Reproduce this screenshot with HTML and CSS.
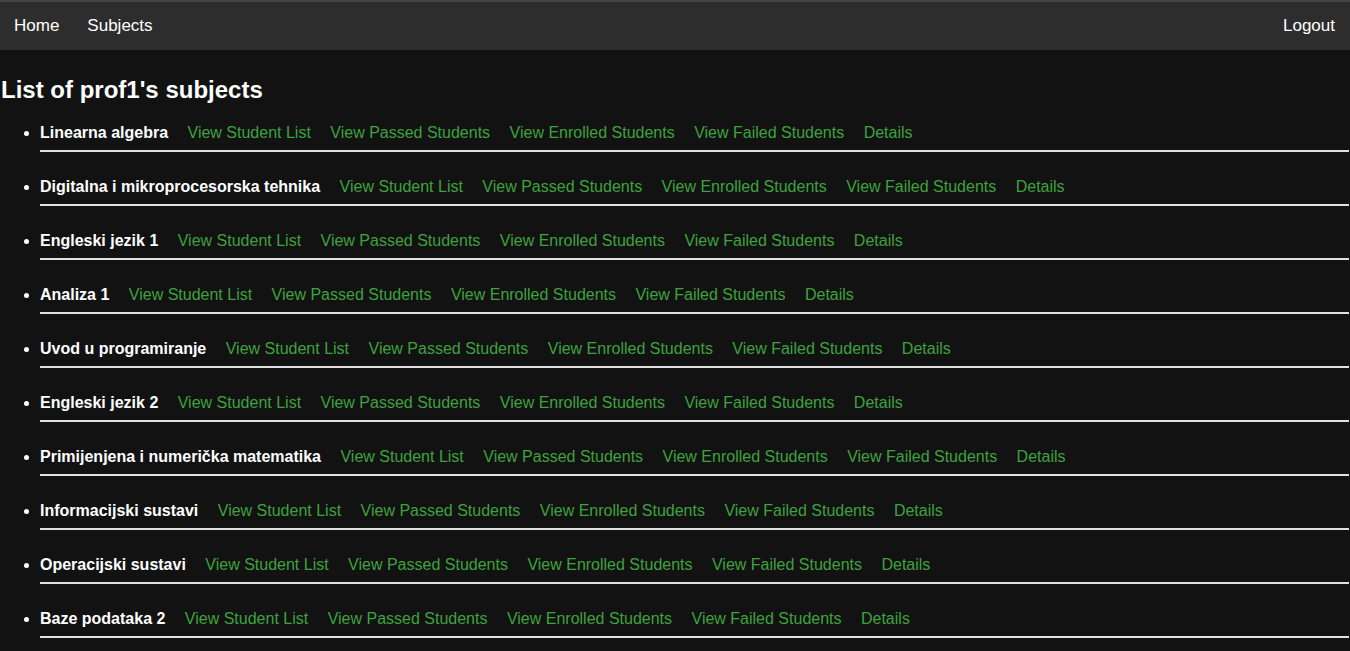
FILE: index.html
```html
<!DOCTYPE html>
<html lang="en">
<head>
<meta charset="utf-8">
<title>Subjects</title>
<link rel="stylesheet" href="styles.css">
</head>
<body>
<nav class="topnav">
  <div class="nav-left">
    <a class="nav-link" href="#">Home</a>
    <a class="nav-link" href="#">Subjects</a>
  </div>
  <a class="nav-link nav-right" href="#">Logout</a>
</nav>
<main>
  <h2 class="title">List of prof1's subjects</h2>
  <ul class="subjects">
    <li><span class="name">Linearna algebra</span> <a href="#">View Student List</a> <a href="#">View Passed Students</a> <a href="#">View Enrolled Students</a> <a href="#">View Failed Students</a> <a href="#">Details</a></li>
    <li><span class="name">Digitalna i mikroprocesorska tehnika</span> <a href="#">View Student List</a> <a href="#">View Passed Students</a> <a href="#">View Enrolled Students</a> <a href="#">View Failed Students</a> <a href="#">Details</a></li>
    <li><span class="name">Engleski jezik 1</span> <a href="#">View Student List</a> <a href="#">View Passed Students</a> <a href="#">View Enrolled Students</a> <a href="#">View Failed Students</a> <a href="#">Details</a></li>
    <li><span class="name">Analiza 1</span> <a href="#">View Student List</a> <a href="#">View Passed Students</a> <a href="#">View Enrolled Students</a> <a href="#">View Failed Students</a> <a href="#">Details</a></li>
    <li><span class="name">Uvod u programiranje</span> <a href="#">View Student List</a> <a href="#">View Passed Students</a> <a href="#">View Enrolled Students</a> <a href="#">View Failed Students</a> <a href="#">Details</a></li>
    <li><span class="name">Engleski jezik 2</span> <a href="#">View Student List</a> <a href="#">View Passed Students</a> <a href="#">View Enrolled Students</a> <a href="#">View Failed Students</a> <a href="#">Details</a></li>
    <li><span class="name">Primijenjena i numerička matematika</span> <a href="#">View Student List</a> <a href="#">View Passed Students</a> <a href="#">View Enrolled Students</a> <a href="#">View Failed Students</a> <a href="#">Details</a></li>
    <li><span class="name">Informacijski sustavi</span> <a href="#">View Student List</a> <a href="#">View Passed Students</a> <a href="#">View Enrolled Students</a> <a href="#">View Failed Students</a> <a href="#">Details</a></li>
    <li><span class="name">Operacijski sustavi</span> <a href="#">View Student List</a> <a href="#">View Passed Students</a> <a href="#">View Enrolled Students</a> <a href="#">View Failed Students</a> <a href="#">Details</a></li>
    <li><span class="name">Baze podataka 2</span> <a href="#">View Student List</a> <a href="#">View Passed Students</a> <a href="#">View Enrolled Students</a> <a href="#">View Failed Students</a> <a href="#">Details</a></li>
  </ul>
</main>
</body>
</html>
```
FILE: styles.css
```css
html, body {
  margin: 0;
  padding: 0;
  background: #121212;
  color: #ffffff;
  font-family: "Liberation Sans", Arial, sans-serif;
}

.topnav {
  display: flex;
  justify-content: space-between;
  align-items: center;
  background: #2d2d2d;
  border-top: 2px solid #444444;
  height: 48px;
}

.nav-left {
  display: flex;
}

.nav-link {
  color: #ffffff;
  text-decoration: none;
  font-size: 17px;
  padding: 0 14px;
  line-height: 48px;
}

.nav-right {
  padding-right: 15px;
}

.title {
  font-size: 24px;
  font-weight: bold;
  line-height: 28px;
  margin: 26px 0 20px 1px;
}

.subjects {
  margin: 0;
  padding: 0 1px 0 40px;
}

.subjects li {
  font-size: 16px;
  line-height: 18px;
  padding-bottom: 8px;
  margin-bottom: 26px;
  border-bottom: 2px solid #e0e0e0;
}

.subjects li::marker {
  color: #ffffff;
}

.name {
  font-weight: bold;
  color: #ffffff;
}

.subjects a {
  color: #3ea23e;
  text-decoration: none;
  margin-left: 15px;
}
```
